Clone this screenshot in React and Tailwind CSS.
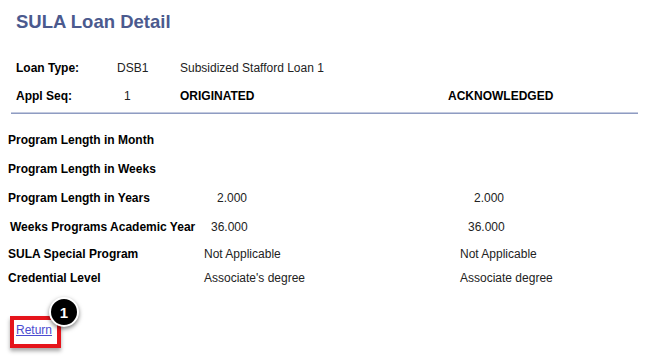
export default function App() {
  const font = { fontFamily: '"Liberation Sans", Arial, sans-serif' };
  return (
    <div
      className="relative w-[665px] h-[357px] bg-white overflow-hidden text-[12px] leading-[14px] text-black"
      style={font}
    >
      <div className="pl-[16px] pt-[11px]">
        <h1 className="text-[18.5px] leading-[22px] font-bold text-[#4b5a8e]">SULA Loan Detail</h1>
      </div>

      <div className="pl-[16px] mt-[28px] flex">
        <div className="w-[101px] font-bold">Loan Type:</div>
        <div className="w-[63px] text-[#222]">DSB1</div>
        <div className="text-[#222]">Subsidized Stafford Loan 1</div>
      </div>
      <div className="pl-[16px] mt-[14px] flex">
        <div className="w-[101px] font-bold">Appl Seq:</div>
        <div className="w-[63px] pl-[7px] text-[#222]">1</div>
        <div className="w-[268px] font-bold">ORIGINATED</div>
        <div className="font-bold">ACKNOWLEDGED</div>
      </div>

      <div className="ml-[11px] mt-[9px] w-[627px] h-[2px] border-t border-b border-t-[#c3cadf] border-b-[#8f9cc2]"></div>

      <div className="pl-[8px] mt-[19px] flex">
        <div className="w-[196px] font-bold">Program Length in Month</div>
      </div>
      <div className="pl-[8px] mt-[15px] flex">
        <div className="w-[196px] font-bold">Program Length in Weeks</div>
      </div>
      <div className="pl-[8px] mt-[15px] flex">
        <div className="w-[196px] font-bold">Program Length in Years</div>
        <div className="w-[256px] pl-[13px] text-[#222]">2.000</div>
        <div className="pl-[14px] text-[#222]">2.000</div>
      </div>
      <div className="pl-[8px] mt-[15px] flex">
        <div className="w-[196px] pl-[2px] font-bold whitespace-nowrap">Weeks Programs Academic Year</div>
        <div className="w-[256px] pl-[7px] text-[#222]">36.000</div>
        <div className="pl-[8px] text-[#222]">36.000</div>
      </div>
      <div className="pl-[8px] mt-[13px] flex">
        <div className="w-[196px] font-bold">SULA Special Program</div>
        <div className="w-[256px] text-[#222]">Not Applicable</div>
        <div className="text-[#222]">Not Applicable</div>
      </div>
      <div className="pl-[8px] mt-[10px] flex">
        <div className="w-[196px] font-bold">Credential Level</div>
        <div className="w-[256px] text-[#222]">Associate's degree</div>
        <div className="text-[#222]">Associate degree</div>
      </div>

      <div className="ml-[10px] mt-[31px] w-[51px] h-[32px] border-[4px] border-[#e5141b] pl-[2px] pt-[3px] shadow-[0_3px_4px_rgba(0,0,0,0.35)]">
        <a href="#" className="underline text-[#4b4bd0]">Return</a>
      </div>

      <div className="absolute left-[49px] top-[297px] w-[30px] h-[30px] rounded-full bg-black border-[2px] border-white shadow-[0_2px_4px_rgba(0,0,0,0.5)] flex items-center justify-center">
        <span className="text-white font-bold text-[15px] leading-none">1</span>
      </div>
    </div>
  );
}
